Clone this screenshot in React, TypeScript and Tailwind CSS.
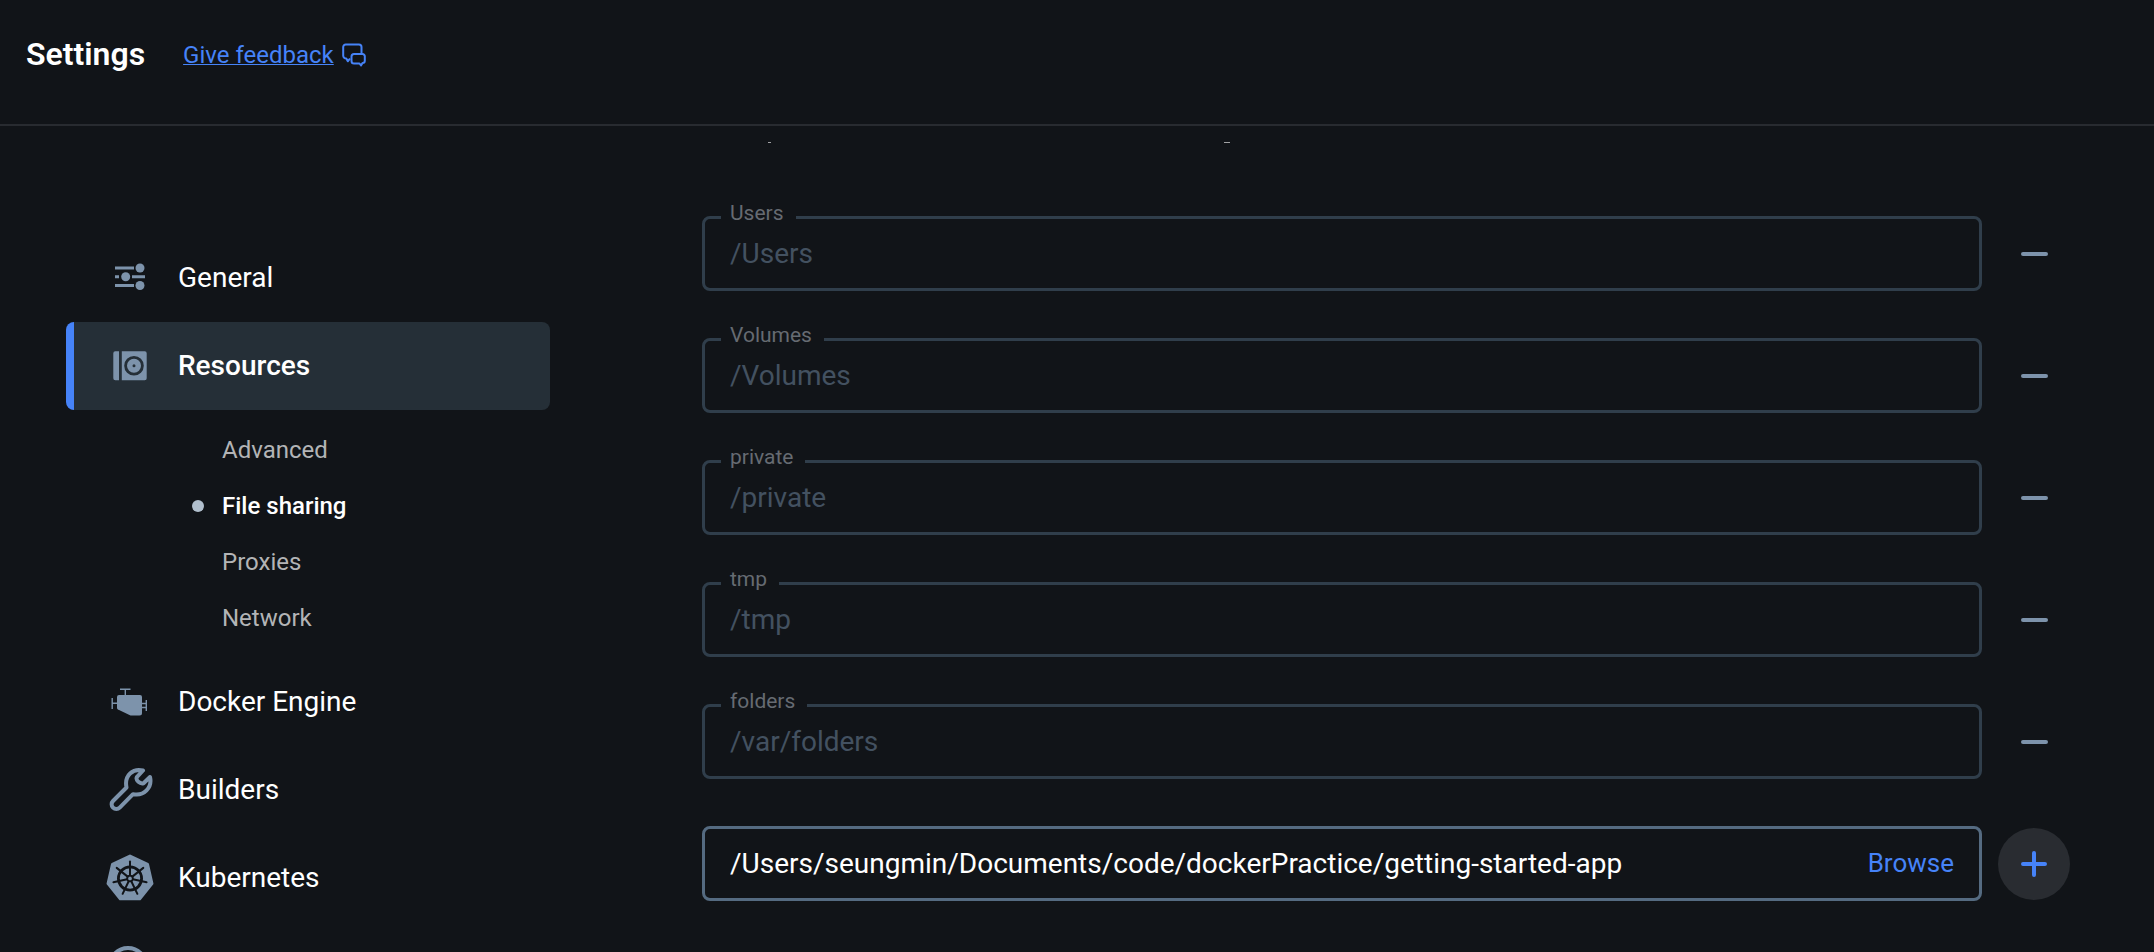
import { useState, type ReactNode } from "react";
import clsx from "clsx";

// ── Icons ─────────────────────────────────────────────────────────────────────
function FeedbackIcon() {
  return (
    <svg width="24" height="24" viewBox="0 0 24 24" fill="none" stroke="currentColor" strokeWidth="2" strokeLinejoin="round">
      <path d="M8 15.5 5.8 18.3 4.3 15.6A3 3 0 0 1 1.200 12.700V4a2.500 2.500 0 0 1 2.500-2.500H17A2.500 2.500 0 0 1 19.500 4v7" />
      <path d="M12 11h8.500a2.300 2.300 0 0 1 2.300 2.300v4.400a2.300 2.300 0 0 1-2.300 2.300L19 22.500 17.500 20.500H12a2.500 2.500 0 0 1-2.500-2.500v-4.500a2.500 2.500 0 0 1 2.500-2.500Z" />
    </svg>
  );
}

function GeneralIcon() {
  return (
    <svg width="48" height="48" viewBox="0 0 48 48" fill="currentColor">
      <path d="M9 12.500h19v3H9zM9 21.200h4v3H9zM26 21.200h13v3H26zM9 30h19v3H9z" />
      <circle cx="34" cy="14" r="4.500" />
      <circle cx="19.700" cy="22.700" r="4.500" />
      <circle cx="34" cy="31.500" r="4.500" />
    </svg>
  );
}

function ResourcesIcon() {
  return (
    <svg width="48" height="48" viewBox="0 0 48 48" fill="currentColor">
      <path d="M9.300 9.200H13v29H9.300A2 2 0 0 1 7.300 36.200v-25a2 2 0 0 1 2-2Z" />
      <path
        fillRule="evenodd"
        d="M15.800 9.200h22.900a2 2 0 0 1 2 2v25a2 2 0 0 1-2 2H15.800ZM28 13.900a9.800 9.800 0 1 0 0 19.600 9.800 9.800 0 0 0 0-19.600Z"
      />
      <path fillRule="evenodd" d="M28 16.700a7 7 0 1 0 0 14 7 7 0 0 0 0-14Zm0 5.500a1.500 1.500 0 1 1 0 3 1.500 1.500 0 0 1 0-3Z" />
    </svg>
  );
}

function EngineIcon() {
  return (
    <svg width="48" height="48" viewBox="0 0 48 48" fill="currentColor">
      <path d="M13 17h21a2 2 0 0 1 2 2V35a2.500 2.500 0 0 1-2.500 2.500H24.500L12 31.500A2 2 0 0 1 11 30V19a2 2 0 0 1 2-2Z" />
      <path
        d="M14 11.300h10.500M19.300 11.300v6M6.200 20v11M6.200 25.300h5M40.300 22v11M36 25.500h4.300M36 29.500h4.300"
        fill="none"
        stroke="currentColor"
        strokeWidth="1.400"
      />
    </svg>
  );
}

function WrenchIcon() {
  return (
    <svg width="48" height="48" viewBox="0 0 48 48" fill="none" stroke="currentColor" strokeWidth="4" strokeLinejoin="round" strokeLinecap="round">
      <path d="M37 4.500C27 2 18 9.500 20.500 21.500L7 35A4.700 4.700 0 0 0 13.700 41.700L27 28.200C38 30.500 46.500 21.500 44 11L37.500 17.300C34 18.200 29.500 14.500 30.800 11.200Z" />
    </svg>
  );
}

const SPOKES = [0, 1, 2, 3, 4, 5, 6].map((i) => {
  const a = (i * 2 * Math.PI) / 7 - Math.PI / 2;
  return { x: Math.cos(a), y: Math.sin(a) };
});

function KubernetesIcon() {
  const hull = SPOKES.map((p) => `${24 + p.x * 22.5},${24.500 + p.y * 22.5}`).join(" ");
  return (
    <svg width="48" height="48" viewBox="0 0 48 48">
      <polygon points={hull} fill="currentColor" stroke="currentColor" strokeWidth="3" strokeLinejoin="round" />
      <g stroke="#111418" fill="none" strokeLinecap="round">
        <circle cx="24" cy="24.500" r="11.600" strokeWidth="2.800" />
        {SPOKES.map((p, i) => (
          <line
            key={i}
            x1={24 + p.x * 3}
            y1={24.500 + p.y * 3}
            x2={24 + p.x * 17}
            y2={24.500 + p.y * 17}
            strokeWidth="2"
          />
        ))}
        <circle cx="24" cy="24.500" r="2.800" strokeWidth="1.800" />
      </g>
    </svg>
  );
}

function UpdatesIcon() {
  return (
    <svg width="48" height="48" viewBox="0 0 48 48" fill="none" stroke="currentColor" strokeWidth="4">
      <circle cx="22" cy="24" r="18" />
      <path d="M22 14v10l7 5" strokeLinecap="round" />
    </svg>
  );
}

// ── Data ──────────────────────────────────────────────────────────────────────
const SUB_ITEMS = ["Advanced", "File sharing", "Proxies", "Network"];

const SHARED = [
  { label: "Users", path: "/Users" },
  { label: "Volumes", path: "/Volumes" },
  { label: "private", path: "/private" },
  { label: "tmp", path: "/tmp" },
  { label: "folders", path: "/var/folders" },
];

// ── Sidebar ───────────────────────────────────────────────────────────────────
function NavItem({ icon, label, active = false }: { icon: ReactNode; label: string; active?: boolean }) {
  return (
    <button
      type="button"
      className={clsx(
        "flex h-22 w-full cursor-pointer items-center gap-6 overflow-hidden rounded-lg border-l-8 pl-8 text-left text-[28px] leading-9 text-white",
        active ? "border-[#4683f8] bg-[#252f37] font-medium" : "border-transparent",
      )}
    >
      <span className="shrink-0 text-[#7d93ab]">{icon}</span>
      {label}
    </button>
  );
}

function SubNav() {
  return (
    <ul className="py-3">
      {SUB_ITEMS.map((item) => {
        const current = item === "File sharing";
        return (
          <li key={item}>
            <a
              href="#"
              className={clsx(
                "flex h-14 items-center gap-[18px] pl-[126px] text-2xl",
                current ? "font-medium text-white" : "text-[#b3b4b6]",
              )}
            >
              <span className={clsx("size-3 rounded-full", current && "bg-[#b1bfcd]")} />
              {item}
            </a>
          </li>
        );
      })}
    </ul>
  );
}

// ── Shared folder row ─────────────────────────────────────────────────────────
function SharedFolder({ label, path }: { label: string; path: string }) {
  const id = `share-${label}`;
  return (
    <div className="flex items-center gap-4">
      <div className="relative flex-1">
        <label htmlFor={id} className="absolute -top-[15px] left-[19px] bg-[#111418] pr-3 pl-[9px] text-[21px] leading-6 text-[#666b72]">
          {label}
        </label>
        <input
          id={id}
          type="text"
          value={path}
          disabled
          readOnly
          className="block h-[75px] w-full rounded-lg border-3 border-[#303e4b] bg-transparent px-[25px] text-[28px] text-[#435160]"
        />
      </div>
      <button type="button" aria-label={`Remove ${path}`} className="flex size-18 cursor-pointer items-center justify-center rounded-full">
        <span className="h-1 w-[27px] rounded-full bg-[#7d93ab]" />
      </button>
    </div>
  );
}

export default function App() {
  const [newPath, setNewPath] = useState("/Users/seungmin/Documents/code/dockerPractice/getting-started-app");

  return (
    <div className="flex h-screen flex-col overflow-hidden bg-[#111418] font-[Roboto,sans-serif]">
      {/* Header */}
      <header className="flex h-[126px] shrink-0 items-start gap-[38px] border-b-2 border-[#282b30] px-[26px] pt-[34px]">
        <h1 className="text-[32px] leading-10 font-semibold text-white">Settings</h1>
        <a href="#" className="flex items-center gap-2 text-2xl leading-[42px] text-[#4683f8]">
          <span className="underline decoration-1">Give feedback</span>
          <FeedbackIcon />
        </a>
      </header>

      <div className="flex min-h-0 flex-1">
        {/* Sidebar */}
        <nav className="ml-[66px] w-[484px] shrink-0 pt-[108px]">
          <NavItem icon={<GeneralIcon />} label="General" />
          <NavItem icon={<ResourcesIcon />} label="Resources" active />
          <SubNav />
          <NavItem icon={<EngineIcon />} label="Docker Engine" />
          <NavItem icon={<WrenchIcon />} label="Builders" />
          <NavItem icon={<KubernetesIcon />} label="Kubernetes" />
          <NavItem icon={<UpdatesIcon />} label="" />
        </nav>

        {/* File sharing */}
        <main className="flex-1 pt-4 pr-[84px] pl-[152px]">
          {/* descenders of the paragraph scrolled under the header */}
          <div aria-hidden="true" className="flex h-px gap-[453px] pl-[66px]">
            <span className="w-[3px] bg-[#a0a1a3]" />
            <span className="w-[6px] bg-[#a0a1a3]" />
          </div>

          <div className="flex flex-col gap-[47px] pt-[73px]">
            {SHARED.map((s) => (
              <SharedFolder key={s.label} {...s} />
            ))}

            <div className="flex items-center gap-4">
              <div className="flex h-[75px] flex-1 items-center rounded-lg border-3 border-[#556b81] px-[25px]">
                <input
                  type="text"
                  aria-label="Path to share"
                  value={newPath}
                  onChange={(e) => setNewPath(e.target.value)}
                  spellCheck={false}
                  className="min-w-0 flex-1 bg-transparent text-[28px] text-white outline-none"
                />
                <button type="button" className="cursor-pointer text-[26px] text-[#4683f8]">
                  Browse
                </button>
              </div>
              <button
                type="button"
                aria-label="Add path"
                className="flex size-18 cursor-pointer items-center justify-center rounded-full bg-[#292c31] text-[#4683f8]"
              >
                <svg width="28" height="28" viewBox="0 0 28 28" stroke="currentColor" strokeWidth="4" strokeLinecap="round">
                  <path d="M14 3v22M3 14h22" />
                </svg>
              </button>
            </div>
          </div>
        </main>
      </div>
    </div>
  );
}
